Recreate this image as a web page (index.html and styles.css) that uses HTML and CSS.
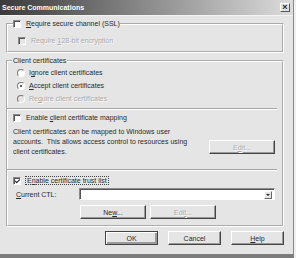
FILE: index.html
```html
<!DOCTYPE html>
<html>
  <head>
    <title>Secure Communications</title>
    <link rel="stylesheet" href="styles.css">
  </head>
  <body>
    <div class="dialog">
      <div class="titlebar">
        <span class="title">Secure Communications</span>
        <span class="close">&times;</span>
      </div>

      <div class="content">
        <fieldset class="group ssl">
          <legend>
            <label class="check"><span class="box"></span><span><u>R</u>equire secure channel (SSL)</span></label>
          </legend>
          <label class="check disabled strong-bit"><span class="box"></span><span>Require <u>1</u>28-bit encryption</span></label>
        </fieldset>

        <fieldset class="group certs">
          <legend class="text-legend">Client certificates</legend>
          <label class="radio"><span class="dot"></span><span>I<u>g</u>nore client certificates</span></label>
          <label class="radio checked"><span class="dot"></span><span><u>A</u>ccept client certificates</span></label>
          <label class="radio disabled"><span class="dot"></span><span>Re<u>q</u>uire client certificates</span></label>

          <div class="sep"></div>

          <label class="check mapping-check"><span class="box"></span><span>Enable <u>c</u>lient certificate mapping</span></label>
          <div class="mapping">
            <p>Client certificates can be mapped to Windows user<br>accounts.&nbsp; This allows access control to resources using<br>client certificates.</p>
            <button class="btn wide" disabled>E<u>d</u>it...</button>
          </div>

          <div class="sep second"></div>

          <label class="check checked trust-check"><span class="box"></span><span class="focus">E<u>n</u>able certificate trust list</span></label>
          <div class="ctl-row">
            <span class="ctl-label"><u>C</u>urrent CTL:</span>
            <div class="combo"><span class="arrow"></span></div>
          </div>
          <div class="ctl-buttons">
            <button class="btn wide">Ne<u>w</u>...</button>
            <button class="btn wide" disabled>Edi<u>t</u>...</button>
          </div>
        </fieldset>

        <div class="footer">
          <button class="btn default">OK</button>
          <button class="btn">Cancel</button>
          <button class="btn"><u>H</u>elp</button>
        </div>
      </div>
    </div>
  </body>
</html>
```

FILE: styles.css
```css
* {
  box-sizing: border-box;
}

body {
  margin: 0;
  background: #f0f0f0;
  font-family: "Liberation Sans", Arial, sans-serif;
  font-size: 7px;
  color: #2a2a2a;
}

.dialog {
  width: 294px;
  height: 258px;
  background: #e5e5e5;
  border-right: 1px solid #8a8a8a;
  border-bottom: 4px solid #7c7c7c;
}

.titlebar {
  height: 16px;
  padding: 0 3px 1px 2px;
  background: linear-gradient(to right, #3a3a3a, #dcdcdc);
  border-bottom: 1px solid #f4f4f4;
  display: flex;
  align-items: center;
  justify-content: space-between;
}

.title {
  color: #fff;
  font-weight: bold;
}

.close {
  width: 10px;
  height: 9px;
  background: #e2e2e2;
  border: 1px solid;
  border-color: #fff #555 #555 #fff;
  font-size: 9px;
  line-height: 6px;
  text-align: center;
  font-weight: bold;
  color: #222;
}

.content {
  padding: 2px 9px 0 6px;
}

.group {
  margin: 0;
  padding: 0 7px 4px 5px;
  border: 2px groove #fff;
  min-width: 0;
}

.group legend {
  padding: 0;
  line-height: 11px;
}

.group .text-legend {
  padding: 0 1px;
  margin-left: -1px;
}

.certs {
  margin-top: 2px;
  padding-bottom: 6px;
}

.check,
.radio {
  height: 13px;
  display: flex;
  align-items: center;
  gap: 5px;
}

.group legend .check {
  height: 11px;
}

.box {
  width: 8px;
  height: 8px;
  background: #fff;
  border: 1px solid;
  border-color: #8a8a8a #fff #fff #8a8a8a;
  box-shadow: inset 1px 1px 0 #555;
  display: flex;
  align-items: center;
  justify-content: center;
}

.checked .box::after {
  content: "";
  width: 4px;
  height: 2px;
  margin-top: -1px;
  border-left: 1.5px solid #222;
  border-bottom: 1.5px solid #222;
  transform: rotate(-45deg);
}

.dot {
  width: 8px;
  height: 8px;
  border-radius: 50%;
  background: #fff;
  border: 1px solid;
  border-color: #7a7a7a #fff #fff #7a7a7a;
  display: flex;
  align-items: center;
  justify-content: center;
}

.checked .dot::after {
  content: "";
  width: 2px;
  height: 2px;
  border-radius: 50%;
  background: #222;
}

.radio {
  padding-left: 4px;
  gap: 4px;
}

.disabled {
  color: #ababab;
  text-shadow: 1px 1px 0 #fafafa;
}

.disabled .box,
.disabled .dot {
  background: #e5e5e5;
}

.strong-bit {
  margin-top: 5px;
  padding-left: 5px;
}

.sep {
  margin: 3px -2px 0 -6px;
  border-top: 1px solid #a4a4a4;
  border-bottom: 1px solid #fff;
}

.sep.second {
  margin-top: 12px;
}

.mapping-check {
  margin-top: 1px;
}

.mapping {
  margin-top: 3px;
  display: flex;
  justify-content: space-between;
  align-items: flex-start;
}

.mapping p {
  margin: 0;
  line-height: 10px;
}

.mapping .btn {
  margin-top: 13px;
}

.trust-check {
  margin-top: 3px;
}

.focus {
  outline: 1px dotted #444;
  padding: 0 1px;
}

.ctl-row {
  margin-top: 1px;
  height: 12px;
  display: flex;
  align-items: center;
  justify-content: space-between;
}

.ctl-label {
  padding-left: 3px;
}

.combo {
  width: 196px;
  height: 12px;
  background: #fff;
  border: 1px solid;
  border-color: #8a8a8a #fff #fff #8a8a8a;
  box-shadow: inset 1px 1px 0 #555;
  display: flex;
  justify-content: flex-end;
  padding: 1px;
}

.arrow {
  width: 8px;
  height: 8px;
  margin: 1px 1px 0 0;
  background: #e5e5e5;
  border: 1px solid;
  border-color: #fff #666 #666 #fff;
  display: flex;
  align-items: center;
  justify-content: center;
}

.arrow::after {
  content: "";
  border-left: 2px solid transparent;
  border-right: 2px solid transparent;
  border-top: 2px solid #222;
}

.ctl-buttons {
  margin-top: 5px;
  padding-left: 67px;
  display: flex;
  gap: 4px;
}

.btn {
  width: 53px;
  height: 14px;
  padding: 0;
  font: inherit;
  color: #2a2a2a;
  background: #e5e5e5;
  border: 1px solid;
  border-color: #fff #444 #444 #fff;
  box-shadow: inset -1px -1px 0 #9a9a9a;
}

.btn.wide {
  width: 66px;
}

.btn:disabled {
  color: #ababab;
  text-shadow: 1px 1px 0 #fafafa;
}

.btn.default {
  border-color: #444;
  box-shadow: inset 1px 1px 0 #fff, inset -2px -2px 0 #9a9a9a;
}

.footer {
  margin-top: 4px;
  display: flex;
  justify-content: flex-end;
  gap: 10px;
}
```
